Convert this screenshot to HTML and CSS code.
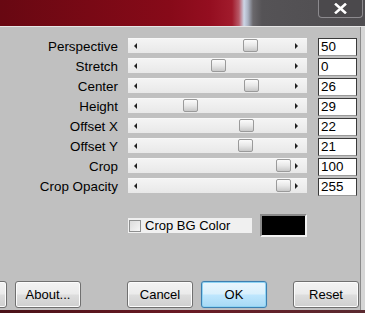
FILE: index.html
```html
<!DOCTYPE html>
<html>
<head>
<meta charset="utf-8">
<link rel="stylesheet" href="styles.css">
</head>
<body>
<div class="window">
  <div class="titlebar">
    <div class="close">
      <svg width="13" height="11" viewBox="0 0 13 11"><path d="M2 1.5 L11 9.5 M11 1.5 L2 9.5" stroke="#ffffff" stroke-width="2.6" stroke-linecap="square"/></svg>
    </div>
  </div>
  <div class="panel">
    <div class="rows">
      <div class="row"><span class="label">Perspective</span><div class="track"><span class="arr left"></span><span class="thumb" style="left:115px"></span><span class="arr right"></span></div><div class="val">50</div></div>
      <div class="row"><span class="label">Stretch</span><div class="track"><span class="arr left"></span><span class="thumb" style="left:83px"></span><span class="arr right"></span></div><div class="val">0</div></div>
      <div class="row"><span class="label">Center</span><div class="track"><span class="arr left"></span><span class="thumb" style="left:116px"></span><span class="arr right"></span></div><div class="val">26</div></div>
      <div class="row"><span class="label">Height</span><div class="track"><span class="arr left"></span><span class="thumb" style="left:55px"></span><span class="arr right"></span></div><div class="val">29</div></div>
      <div class="row"><span class="label">Offset X</span><div class="track"><span class="arr left"></span><span class="thumb" style="left:111px"></span><span class="arr right"></span></div><div class="val">22</div></div>
      <div class="row"><span class="label">Offset Y</span><div class="track"><span class="arr left"></span><span class="thumb" style="left:110px"></span><span class="arr right"></span></div><div class="val">21</div></div>
      <div class="row"><span class="label">Crop</span><div class="track"><span class="arr left"></span><span class="thumb" style="left:148px"></span><span class="arr right"></span></div><div class="val">100</div></div>
      <div class="row"><span class="label">Crop Opacity</span><div class="track"><span class="arr left"></span><span class="thumb" style="left:148px"></span><span class="arr right"></span></div><div class="val">255</div></div>
    </div>
    <div class="bgrow">
      <label class="chk"><span class="box"></span><span class="chk-text">Crop BG Color</span></label>
      <span class="swatch"></span>
    </div>
    <div class="buttons">
      <button class="btn partial"></button>
      <button class="btn about">About...</button>
      <button class="btn cancel">Cancel</button>
      <button class="btn ok">OK</button>
      <button class="btn reset">Reset</button>
    </div>
  </div>
  <div class="bottomstrip"></div>
</div>
</body>
</html>
```
FILE: styles.css
```css
html, body {
  margin: 0;
  padding: 0;
  background: #d6d6d6;
  overflow: hidden;
}
body {
  width: 365px;
  height: 313px;
  font-family: "Liberation Sans", Arial, sans-serif;
  font-size: 13px;
  color: #000;
}
.window {
  width: 365px;
  display: flex;
  flex-direction: column;
}
.titlebar {
  height: 26px;
  border-bottom: 1px solid #e6e6e6;
  background: linear-gradient(90deg, #680812 0px, #790915 90px, #870a19 170px, #940e20 210px, #a11b2c 232px, #b85a68 239px, #cdd6e6 244px, #aab2c2 248px, #6a686c 253px, #555356 262px, #4f4d50 365px);
  display: flex;
  justify-content: flex-end;
  align-items: flex-start;
  padding-right: 2px;
}
.close {
  width: 43px;
  height: 17px;
  border: 1px solid #8c8a8e;
  border-top: none;
  border-radius: 0 0 4px 4px;
  background: #4b494c;
  display: flex;
  align-items: center;
  justify-content: center;
}
.panel {
  width: 361px;
  height: 283px;
  box-sizing: border-box;
  background: #c0c0c0;
  border-right: 1px solid #8a8a8a;
  padding-top: 11px;
  display: flex;
  flex-direction: column;
}
.rows {
  display: flex;
  flex-direction: column;
}
.row {
  height: 20px;
  display: flex;
  align-items: flex-start;
}
.label {
  width: 118px;
  text-align: right;
  line-height: 18px;
  font-size: 13.4px;
  white-space: nowrap;
}
.track {
  position: relative;
  margin-left: 10px;
  width: 179px;
  height: 15px;
  box-sizing: border-box;
  background: linear-gradient(#f4f4f4, #e8e8e8);
  border-top: 1px solid #f8f8f8;
  display: flex;
  align-items: center;
  justify-content: space-between;
  padding: 0 6px 0 6px;
}
.arr {
  width: 0;
  height: 0;
  border-top: 3px solid transparent;
  border-bottom: 3px solid transparent;
}
.arr.left {
  border-right: 3px solid #202020;
}
.arr.right {
  border-left: 3px solid #202020;
  margin-right: 3px;
}
.thumb {
  position: absolute;
  top: 0px;
  width: 15px;
  height: 13px;
  box-sizing: border-box;
  border: 1px solid #9a9a9a;
  border-radius: 2px;
  background: linear-gradient(#fbfbfb 0%, #e8e8e8 50%, #c9c9c9 100%);
}
.val {
  margin-left: 11px;
  width: 39px;
  height: 18px;
  box-sizing: border-box;
  background: #fff;
  border: 1px solid #3a3a3a;
  border-bottom-color: #9a9a9a;
  line-height: 16px;
  padding-left: 2px;
  font-size: 13.4px;
}
.bgrow {
  margin-top: 16px;
  height: 23px;
  display: flex;
  align-items: center;
  padding-left: 128px;
}
.chk {
  width: 124px;
  height: 15px;
  background: #f0f0f0;
  display: flex;
  align-items: center;
}
.box {
  width: 12px;
  height: 12px;
  box-sizing: border-box;
  margin-left: 1px;
  border: 1px solid #8e8f8f;
  background: linear-gradient(135deg, #dcdcdc, #f6f6f6);
}
.chk-text {
  margin-left: 4px;
  line-height: 15px;
}
.swatch {
  margin-left: 8px;
  width: 47px;
  height: 23px;
  box-sizing: border-box;
  background: #000;
  border: 2px solid;
  border-color: #8a8a8a #f2f2f2 #f2f2f2 #8a8a8a;
}
.buttons {
  margin-top: 44px;
  display: flex;
}
.btn {
  width: 66px;
  height: 27px;
  box-sizing: border-box;
  font-family: "Liberation Sans", Arial, sans-serif;
  font-size: 13px;
  color: #000;
  border: 1px solid #707070;
  border-radius: 3px;
  background: linear-gradient(#f3f3f3 0%, #ebebeb 48%, #dddddd 52%, #cfcfcf 100%);
  box-shadow: inset 0 0 0 1px #fcfcfc;
  padding: 0;
  flex: none;
}
.partial { margin-left: -59px; }
.about { margin-left: 8px; }
.cancel { margin-left: 46px; }
.ok {
  margin-left: 8px;
  border-color: #3c7fb1;
  background: linear-gradient(#eaf6fd 0%, #d9f0fc 48%, #bee6fd 52%, #a7d9f5 100%);
  box-shadow: inset 0 0 0 1px #8fd4f4, 0 0 1px #5ab0e0;
}
.reset { margin-left: 26px; }
.bottomstrip {
  height: 3px;
  background: linear-gradient(90deg, #4a1218, #6a1a24 50%, #5a2a30);
}
```
